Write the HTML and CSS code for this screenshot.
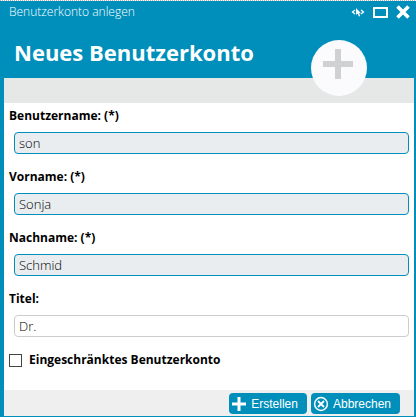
FILE: index.html
```html
<!DOCTYPE html>
<html lang="de">
<head>
<meta charset="utf-8">
<title>Benutzerkonto anlegen</title>
<link rel="stylesheet" href="styles.css">
</head>
<body>
<form class="dialog">
  <header class="head">
    <div class="titlebar">
      <span class="caption">Benutzerkonto anlegen</span>
      <button class="tool" type="button" aria-label="Inspizieren">
        <svg width="14" height="10" viewBox="0 0 14 10" fill="none" stroke="#fff"><path d="M4 3 1.500 5 4 7M10 3l2.500 2L10 7" stroke-width="1.3"/><path d="M5 1v7l1.600-1.400L8 9.500l1.200-.6L8 6.200h2z" fill="#fff" stroke="none"/></svg>
      </button>
      <button class="tool" type="button" aria-label="Maximieren">
        <svg width="15" height="11" viewBox="0 0 15 11"><path d="M1 1h13v9H1z" fill="none" stroke="#fff" stroke-width="2"/></svg>
      </button>
      <button class="tool" type="button" aria-label="Schließen">
        <svg width="14" height="14" viewBox="0 0 14 14"><path d="M1.500 1.500l11 11M12.500 1.500l-11 11" stroke="#fff" stroke-width="3.6"/></svg>
      </button>
    </div>
    <h1 class="title">Neues Benutzerkonto</h1>
    <div class="badge">
      <svg width="56" height="56" viewBox="0 0 56 56"><circle cx="28" cy="28" r="28" fill="#fbfbfe"/><path d="M24 9h6v12h12v6H30v12h-6V27H12v-6h12z" fill="#cfd1d3"/></svg>
    </div>
  </header>
  <div class="strip"></div>
  <main class="fields">
    <div class="field"><label for="user">Benutzername: (*)</label><input class="required" id="user" type="text" value="son"></div>
    <div class="field"><label for="first">Vorname: (*)</label><input class="required" id="first" type="text" value="Sonja"></div>
    <div class="field"><label for="last">Nachname: (*)</label><input class="required" id="last" type="text" value="Schmid"></div>
    <div class="field"><label for="title">Titel:</label><input id="title" type="text" value="Dr."></div>
    <div class="check"><input id="limited" type="checkbox"><label for="limited">Eingeschränktes Benutzerkonto</label></div>
  </main>
  <footer class="actions">
    <button class="action" type="submit">
      <svg width="16" height="16" viewBox="0 0 16 16"><path d="M8 1v14M1 8h14" stroke="#fff" stroke-width="3"/></svg>
      Erstellen
    </button>
    <button class="action" type="button">
      <svg width="16" height="16" viewBox="0 0 16 16" fill="none" stroke="#fff"><circle cx="8" cy="8" r="6.4" stroke-width="1.5"/><path d="M5 5l6 6M11 5l-6 6" stroke-width="1.8"/></svg>
      Abbrechen
    </button>
  </footer>
</form>
</body>
</html>
```
FILE: styles.css
```css
* {
  box-sizing: border-box;
}

body {
  margin: 0;
  background: #fff;
  color: #000;
  font-family: "Open Sans", sans-serif;
  font-size: 13px;
  line-height: 18px;
}

.dialog {
  display: flex;
  flex-direction: column;
  min-height: 100vh;
  border: solid #008fbb;
  border-width: 0 2px 1px 4px;
}

.head {
  position: relative;
  margin: 0 -2px 0 -4px;
  padding-bottom: 11px;
  background: #008fbb;
  color: #fff;
}

.head::before {
  content: "";
  display: block;
  height: 1px;
  background: repeating-linear-gradient(90deg, #b4b4b4 0 1px, #fff 1px 2px);
}

.titlebar {
  display: flex;
  align-items: center;
  gap: 8px;
  height: 22px;
  padding: 0 6px 0 9px;
}

.caption {
  flex: 1;
  font-size: 12px;
  font-weight: 300;
}

.tool {
  display: flex;
  padding: 0;
  border: 0;
  background: none;
}

.title {
  margin: 14px 0 0;
  padding-left: 14px;
  font-size: 22px;
  font-weight: 700;
  line-height: 30px;
}

.badge {
  position: absolute;
  top: 40px;
  right: 49px;
  height: 56px;
}

.strip {
  height: 25px;
  background: #e6e8e8;
}

.fields {
  flex: 1;
  padding: 4px 5px 21px;
}

.field {
  margin-bottom: 14px;
}

.field label,
.check label {
  display: block;
  font-size: 12px;
  font-weight: 700;
}

.field input {
  display: block;
  width: calc(100% - 5px);
  height: 22px;
  margin: 7px 0 0 5px;
  padding: 0 4px;
  border: 1px solid #ccc;
  border-radius: 4px;
  background: #fff;
  color: #000;
  font: 300 13px "Open Sans", sans-serif;
}

.field .required {
  border-color: #008fbb;
  background: #e9edf0;
}

.check {
  display: flex;
  align-items: center;
  gap: 7px;
}

.check input {
  appearance: none;
  width: 13px;
  height: 13px;
  margin: 0;
  border: 1px solid #444;
  background: #fff;
}

.actions {
  display: flex;
  justify-content: flex-end;
  gap: 4px;
  padding: 3px 14px 2px;
  background: #efefef;
}

.action {
  display: flex;
  align-items: center;
  gap: 4px;
  height: 21px;
  padding: 0 9px 0 2px;
  border: 0;
  border-radius: 4px;
  background: #008fbb;
  color: #fff;
  font: 12px "Liberation Sans", Arial, sans-serif;
}
```
